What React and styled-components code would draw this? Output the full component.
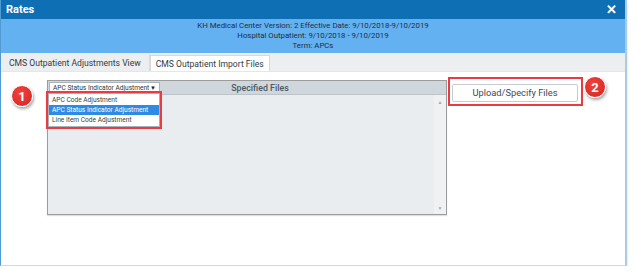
import React from "react";
import styled, { createGlobalStyle } from "styled-components";

const GlobalStyle = createGlobalStyle`
  html, body {
    margin: 0;
    padding: 0;
    background: #ffffff;
    font-family: Roboto, "Liberation Sans", sans-serif;
  }
`;

const Window = styled.div`
  width: 627px;
  height: 266px;
  box-sizing: border-box;
  border-left: 1px solid #4f9bd2;
  border-right: 2px solid #a9cbe6;
  border-bottom: 1px solid #d4d6d8;
  box-shadow: 0 2px 2px rgba(0, 0, 0, 0.18);
  display: flex;
  flex-direction: column;
  background: #ffffff;
`;

const TitleBar = styled.div`
  height: 19px;
  flex-shrink: 0;
  background: #0f6fb5;
  display: flex;
  align-items: center;
  justify-content: space-between;
  padding: 0 8px 0 5px;
  color: #ffffff;
  font-weight: 700;
  font-size: 11px;
`;

const CloseX = styled.span`
  font-size: 13px;
  font-weight: 700;
  line-height: 1;
`;

const InfoHeader = styled.div`
  height: 34px;
  flex-shrink: 0;
  background: #63b1f1;
  display: flex;
  flex-direction: column;
  align-items: center;
  justify-content: center;
  color: #1c2f45;
  font-size: 7.8px;
  line-height: 9.7px;
`;

const TabStrip = styled.div`
  height: 18px;
  flex-shrink: 0;
  background: #eceef0;
  display: flex;
  align-items: flex-end;
  border-bottom: 1px solid #e4e6e8;
`;

const Tab = styled.div`
  height: ${(p) => (p.$active ? "16px" : "17px")};
  box-sizing: border-box;
  padding: 0 ${(p) => (p.$active ? "5px" : "8px")};
  display: flex;
  align-items: center;
  font-size: 8.6px;
  color: #333b44;
  background: ${(p) => (p.$active ? "#ffffff" : "transparent")};
  border: ${(p) => (p.$active ? "1px solid #d6d9dc" : "none")};
  border-bottom: none;
  border-right: ${(p) => (p.$active ? "1px solid #d6d9dc" : "1px solid #d9dcdf")};
`;

const Content = styled.div`
  flex: 1;
  display: flex;
  align-items: flex-start;
  padding: 7px 0 0 10px;
`;

const Badge = styled.div`
  width: 22px;
  height: 22px;
  border-radius: 50%;
  background: radial-gradient(circle at 40% 35%, #f0433e, #d32420);
  box-shadow: 1px 2px 3px rgba(0, 0, 0, 0.35);
  border: 1px solid #ffffff;
  box-sizing: border-box;
  color: #ffffff;
  font-weight: 700;
  font-size: 13px;
  display: flex;
  align-items: center;
  justify-content: center;
  margin-top: ${(p) => p.$top}px;
  margin-left: ${(p) => p.$left || 0}px;
  flex-shrink: 0;
`;

const Panel = styled.div`
  position: relative;
  width: 400px;
  height: 135px;
  box-sizing: border-box;
  margin-left: 14px;
  margin-top: 1px;
  border: 1px solid #9a9c9e;
  box-shadow: 0 1px 1px rgba(0, 0, 0, 0.12);
  background: #e9edf0;
  display: flex;
  flex-direction: column;
`;

const PanelHeader = styled.div`
  height: 13px;
  background: #cfd7dd;
  border-bottom: 1px solid #bcc3c9;
  display: flex;
  align-items: center;
  padding-left: 1px;
`;

const HeaderTitle = styled.div`
  flex: 1;
  text-align: center;
  font-size: 8.8px;
  font-weight: 500;
  color: #4b5966;
  padding-right: 86px;
`;

const Select = styled.div`
  width: 111px;
  height: 11px;
  box-sizing: border-box;
  background: #ffffff;
  border: 1px solid #aab4bd;
  display: flex;
  align-items: center;
  justify-content: space-between;
  padding: 0 3px 0 3px;
  font-size: 6.6px;
  color: #333;
`;

const Arrow = styled.span`
  font-size: 6px;
  color: #222;
`;

const PanelBody = styled.div`
  flex: 1;
  display: flex;
  justify-content: flex-end;
`;

const Scrollbar = styled.div`
  width: 12px;
  background: #f0f1f2;
  display: flex;
  flex-direction: column;
  justify-content: space-between;
  align-items: center;
  padding: 4px 0 3px;
  color: #a9adb1;
  font-size: 5px;
`;

const DropList = styled.div`
  position: absolute;
  left: 0;
  top: 12px;
  width: 112px;
  box-sizing: border-box;
  background: #ffffff;
  border: 1px solid #a8b0b8;
  outline: 2px solid #ea3c40;
  display: flex;
  flex-direction: column;
  padding: 1px 0;
`;

const Option = styled.div`
  height: 10px;
  display: flex;
  align-items: center;
  padding-left: 3px;
  font-size: 6.6px;
  color: ${(p) => (p.$selected ? "#ffffff" : "#3a3f44")};
  background: ${(p) => (p.$selected ? "#2f8ae6" : "#ffffff")};
`;

const ButtonFrame = styled.div`
  margin-left: 1px;
  margin-top: -2px;
  padding: 2px 3px 2px 2px;
  border: 2px solid #ea3c40;
`;

const UploadButton = styled.button`
  width: 126px;
  height: 18px;
  background: #ffffff;
  border: 1px solid #c5cbd0;
  border-radius: 2px;
  font-family: Roboto, "Liberation Sans", sans-serif;
  font-size: 9.3px;
  color: #3b4a5a;
  padding: 0;
`;

export default function App() {
  return (
    <>
      <GlobalStyle />
      <Window>
        <TitleBar>
          <span>Rates</span>
          <CloseX>✕</CloseX>
        </TitleBar>
        <InfoHeader>
          <div>KH Medical Center Version: 2 Effective Date: 9/10/2018-9/10/2019</div>
          <div>Hospital Outpatient: 9/10/2018 - 9/10/2019</div>
          <div>Term: APCs</div>
        </InfoHeader>
        <TabStrip>
          <Tab>CMS Outpatient Adjustments View</Tab>
          <Tab $active>CMS Outpatient Import Files</Tab>
        </TabStrip>
        <Content>
          <Badge $top={6}>1</Badge>
          <Panel>
            <PanelHeader>
              <Select>
                <span>APC Status Indicator Adjustment</span>
                <Arrow>▼</Arrow>
              </Select>
              <HeaderTitle>Specified Files</HeaderTitle>
            </PanelHeader>
            <PanelBody>
              <Scrollbar>
                <span>▲</span>
                <span>▼</span>
              </Scrollbar>
            </PanelBody>
            <DropList>
              <Option>APC Code Adjustment</Option>
              <Option $selected>APC Status Indicator Adjustment</Option>
              <Option>Line Item Code Adjustment</Option>
            </DropList>
          </Panel>
          <ButtonFrame>
            <UploadButton>Upload/Specify Files</UploadButton>
          </ButtonFrame>
          <Badge $top={-3} $left={1}>2</Badge>
        </Content>
      </Window>
    </>
  );
}
